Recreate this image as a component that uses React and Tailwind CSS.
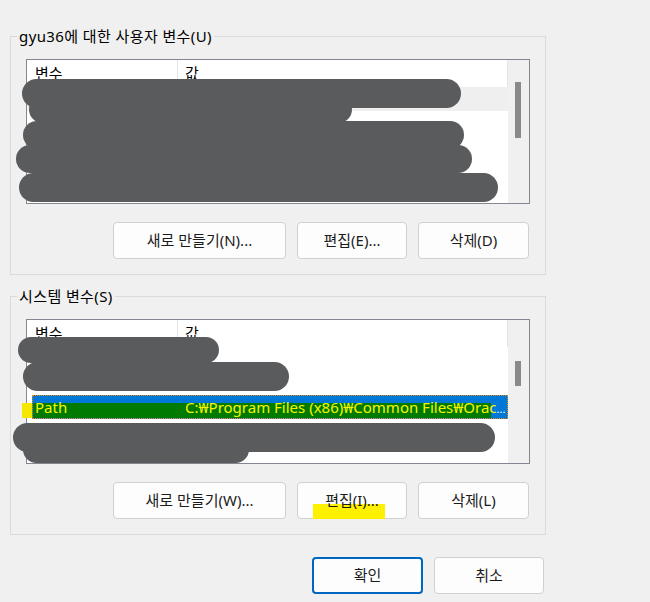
import React from 'react'

const font = { fontFamily: '"Noto Sans", "Noto Sans CJK KR", sans-serif' }

const Button = ({ label, className = '', border = 'border border-[#d0d0d0]', children }) => (
  <button
    className={`relative h-[37px] rounded-[4px] bg-[#fdfdfd] text-[15px] text-[#1b1b1b] ${border} ${className}`}
  >
    {children}
    <span className="relative">{label}</span>
  </button>
)

const Blob = ({ className }) => (
  <div className={`absolute z-20 rounded-full bg-[#5a5b5d] ${className}`} />
)

const VarList = ({ thumbClass, children }) => (
  <div className="flex h-[145px] border border-[#828790] bg-white">
    <div className="flex flex-1 flex-col overflow-hidden">
      <div className="flex h-[27px] shrink-0 text-[15px] text-black">
        <div className="flex w-[151px] items-center border-r border-[#e5e5e5] pl-[8px]">변수</div>
        <div className="flex flex-1 items-center border-r border-[#e5e5e5] pl-[7px]">값</div>
      </div>
      {children}
    </div>
    <div className="w-[21px] bg-[#f0f0f0]">
      <div className={`ml-[7px] w-[6px] bg-[#8a8a8a] ${thumbClass}`} />
    </div>
  </div>
)

const Row = ({ className = '' }) => <div className={`h-[24px] shrink-0 ${className}`} />

const Group = ({ title, children }) => (
  <fieldset className="w-[536px] border border-[#dadada]">
    <legend className="ml-[6px] px-[2px] text-[15px] leading-[20px] tracking-[0.4px] text-black">{title}</legend>
    <div className="px-[15px] pb-[15px] pt-[13px]">{children}</div>
  </fieldset>
)

const ButtonRow = ({ children }) => (
  <div className="mt-[18px] mr-[1px] flex justify-end gap-[11px]">{children}</div>
)

export default function App() {
  return (
    <div
      className="relative h-[602px] w-[650px] overflow-hidden bg-[#f0f0f0] pl-[10px] pt-[26px]"
      style={font}
    >
      <Group title="gyu36에 대한 사용자 변수(U)">
        <VarList thumbClass="mt-[22px] h-[56px]">
          <Row className="bg-[#efefef]" />
          <Row />
          <Row />
          <Row />
          <Row />
        </VarList>
        <ButtonRow>
          <Button label="새로 만들기(N)..." className="w-[173px]" />
          <Button label="편집(E)..." className="w-[110px]" />
          <Button label="삭제(D)" className="w-[111px]" />
        </ButtonRow>
      </Group>

      <div className="mt-[11px]">
        <Group title="시스템 변수(S)">
          <VarList thumbClass="mt-[41px] h-[25px]">
            <Row />
            <Row />
            <div className="relative ml-[5px] flex h-[24px] shrink-0 bg-[#0078d7] text-[15px] leading-[24px] outline outline-1 -outline-offset-1 outline-dotted outline-[#f08a00]">
              <div className="absolute left-[1px] top-[8px] h-[15px] w-[458px] bg-[#007a00]" />
              <div className="relative w-[146px] pl-[3px] text-[#f5f500]">Path</div>
              <div className="relative flex-1 whitespace-nowrap pl-[7px]">
                <span className="text-[#f5f500]">C:₩Program Files (x86)₩Common Files₩Orac</span>
                <span className="text-[11px] text-white">...</span>
              </div>
            </div>
            <Row />
            <Row />
          </VarList>
          <ButtonRow>
            <Button label="새로 만들기(W)..." className="w-[173px]" />
            <Button label="편집(I)..." className="w-[110px]">
              <span className="absolute left-[15px] top-[21px] h-[15px] w-[72px] bg-[#fff000]" />
            </Button>
            <Button label="삭제(L)" className="w-[111px]" />
          </ButtonRow>
        </Group>
      </div>

      <div className="mt-[22px] flex w-[534px] justify-end gap-[11px]">
        <Button label="확인" className="w-[111px]" border="border-2 border-[#0067c0]" />
        <Button label="취소" className="w-[110px]" />
      </div>

      {/* redactions */}
      <Blob className="left-[22px] top-[79px] h-[29px] w-[439px]" />
      <Blob className="left-[29px] top-[96px] h-[27px] w-[323px]" />
      <Blob className="left-[23px] top-[121px] h-[28px] w-[441px]" />
      <Blob className="left-[16px] top-[145px] h-[28px] w-[456px]" />
      <Blob className="left-[19px] top-[173px] h-[29px] w-[479px]" />

      <Blob className="left-[18px] top-[337px] h-[26px] w-[201px]" />
      <Blob className="left-[23px] top-[362px] h-[29px] w-[266px]" />
      <Blob className="left-[23px] top-[436px] h-[27px] w-[226px]" />
      <Blob className="left-[13px] top-[423px] h-[29px] w-[482px]" />

      <div className="absolute left-[22px] top-[403px] z-10 h-[15px] w-[10px] bg-[#f5e800]" />
    </div>
  )
}
